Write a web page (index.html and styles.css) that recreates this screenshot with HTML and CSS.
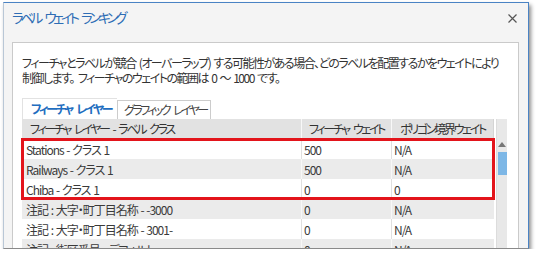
FILE: index.html
```html
<!DOCTYPE html>
<html lang="ja">

<head>
    <meta charset="UTF-8">
    <title>ラベル ウェイト ランキング</title>
    <link rel="stylesheet" href="styles.css">
</head>

<body>
    <div class="dialog">
        <div class="titlebar">
            <span class="title">ラベル ウェイト ランキング</span>
            <svg class="close" width="9" height="9" viewBox="0 0 9 9">
                <path d="M0.5 0.5 L8.5 8.5 M8.5 0.5 L0.5 8.5" stroke="#555" stroke-width="1.2" fill="none"/>
            </svg>
        </div>
        <div class="panel">
            <p class="intro">フィーチャとラベルが競合 (オーバーラップ) する可能性がある場合、どのラベルを配置するかをウェイトにより<br>制御します<span class="stop">。</span>フィーチャのウェイトの範囲は 0 ～ 1000 です。</p>
            <div class="tabs">
                <div class="tab active">フィーチャ レイヤー</div>
                <div class="tab">グラフィック レイヤー</div>
            </div>
            <div class="grid-wrap">
                <div class="grid">
                    <div class="row head">
                        <div class="cell name">フィーチャ レイヤー - ラベル クラス</div>
                        <div class="cell num">フィーチャ ウェイト</div>
                        <div class="cell num">ポリゴン境界ウェイト</div>
                    </div>
                    <div class="highlight">
                        <div class="row">
                            <div class="cell">Stations - クラス 1</div>
                            <div class="cell">500</div>
                            <div class="cell">N/A</div>
                        </div>
                        <div class="row alt">
                            <div class="cell">Railways - クラス 1</div>
                            <div class="cell">500</div>
                            <div class="cell">N/A</div>
                        </div>
                        <div class="row">
                            <div class="cell">Chiba - クラス 1</div>
                            <div class="cell">0</div>
                            <div class="cell">0</div>
                        </div>
                    </div>
                    <div class="row alt">
                        <div class="cell">注記 : 大字・町丁目名称 - -3000</div>
                        <div class="cell">0</div>
                        <div class="cell">N/A</div>
                    </div>
                    <div class="row">
                        <div class="cell">注記 : 大字・町丁目名称 - 3001-</div>
                        <div class="cell">0</div>
                        <div class="cell">N/A</div>
                    </div>
                    <div class="row alt">
                        <div class="cell">注記 : 街区番号 - デフォルト</div>
                        <div class="cell">0</div>
                        <div class="cell">N/A</div>
                    </div>
                </div>
                <div class="scrollbar">
                    <div class="arrow"></div>
                    <div class="thumb"></div>
                </div>
            </div>
        </div>
    </div>
</body>

</html>
```

FILE: styles.css
```css
body {
    margin: 0;
    background-color: #ffffff;
    font-family: "Noto Sans CJK JP", sans-serif;
    font-feature-settings: "palt" 1;
}
.dialog {
    margin: 2px 0 0 3px;
    width: 524px;
    height: 245px;
    border: 1px solid #4a83c4;
    border-left-color: #b9c7d6;
    border-bottom-color: #8a8a8a;
    background-color: #f4f4f4;
    box-shadow: 2px 3px 4px rgba(0, 0, 0, 0.45);
    overflow: hidden;
}
.titlebar {
    display: flex;
    align-items: flex-start;
    height: 39px;
    padding-left: 8px;
}
.title {
    margin-top: 3px;
    font-size: 13.5px;
    line-height: 22px;
    letter-spacing: -3.4px;
    word-spacing: 5px;
    color: #2e6db5;
}
.close {
    margin: 11px 11px 0 auto;
}
.panel {
    margin-left: 8px;
    width: 496px;
    height: 230px;
    padding-left: 9px;
    background-color: #ffffff;
    border: 1px solid #cacaca;
}
.intro {
    margin: 0;
    padding-top: 12px;
    font-size: 12px;
    line-height: 15px;
    letter-spacing: -1.5px;
    word-spacing: 2px;
    color: #333333;
    white-space: nowrap;
}
.intro .stop {
    margin-right: 4px;
}
.tabs {
    display: flex;
    align-items: flex-end;
    margin-top: 13px;
    height: 21px;
}
.tab {
    box-sizing: border-box;
    height: 19px;
    width: 94px;
    padding-left: 6px;
    font-size: 12px;
    line-height: 18px;
    letter-spacing: -2.6px;
    word-spacing: 4px;
    color: #444444;
    border: 1px solid #cccccc;
    border-bottom: none;
    white-space: nowrap;
}
.tab.active {
    height: 21px;
    width: 95px;
    padding-left: 8px;
    line-height: 20px;
    letter-spacing: -2.4px;
    color: #1f6ec0;
    font-weight: bold;
    border-color: #e2e2e2;
    border-right: none;
}
.grid-wrap {
    display: flex;
    gap: 2px;
}
.grid {
    width: 472px;
}
.row {
    display: grid;
    grid-template-columns: 280px 90px 102px;
    height: 20px;
    font-size: 12px;
    line-height: 21px;
    letter-spacing: -1px;
    word-spacing: 1px;
    color: #3a3a3a;
    background-color: #ffffff;
}
.row.alt {
    background-color: #ebebeb;
}
.row.head {
    background-color: #e2e2e2;
    color: #333333;
    line-height: 20px;
    letter-spacing: -2.3px;
    word-spacing: 3.5px;
}
.cell {
    padding-left: 2px;
    border-right: 1px solid #e0e0e0;
    white-space: nowrap;
    overflow: hidden;
}
.cell:first-child {
    padding-left: 4px;
}
.cell:last-child {
    border-right: none;
}
.row.alt .cell,
.row.head .cell {
    border-right-color: #f8f8f8;
}
.row.head .cell:last-child {
    border-right: 1px solid #d4d4d4;
}
.row.head .name {
    padding-left: 8px;
}
.row.head .num {
    padding-left: 0;
    text-align: center;
}
.highlight {
    outline: 3px solid #e3141b;
    outline-offset: -2px;
}
.scrollbar {
    display: flex;
    flex-direction: column;
    align-items: center;
    width: 10px;
    height: 140px;
    padding-top: 23px;
    background-color: #e8e8e8;
    border-left: 1px solid #dcdcdc;
}
.arrow {
    width: 0;
    height: 0;
    border-left: 4px solid transparent;
    border-right: 4px solid transparent;
    border-bottom: 5px solid #777777;
}
.thumb {
    margin-top: 5px;
    width: 9px;
    height: 23px;
    background-color: #7db7e6;
}
```
